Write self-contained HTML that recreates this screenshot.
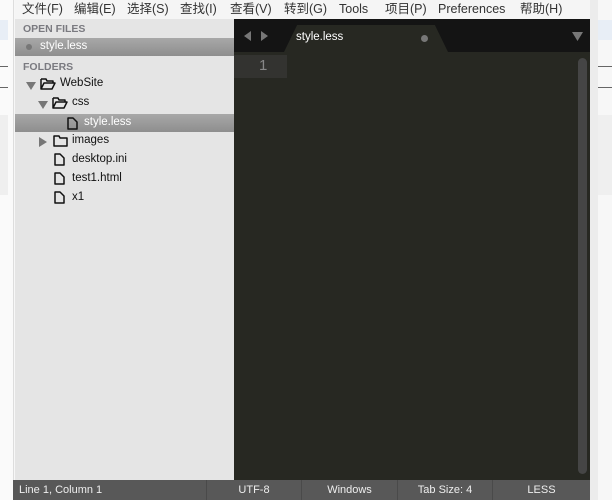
<!DOCTYPE html>
<html><head><meta charset="utf-8"><style>
*{margin:0;padding:0;box-sizing:border-box}
body{width:612px;height:500px;overflow:hidden;background:#f7f7f7;font-family:"Liberation Sans","Noto Sans CJK SC",sans-serif;position:relative}
.a{position:absolute}
.menu{left:15px;top:0;width:575px;height:19px;background:#f5f5f5;font-size:12.5px;color:#333;white-space:nowrap}
.menu span{position:absolute;top:0;height:19px;line-height:19px}
.side{left:15px;top:19px;width:219px;height:461px;background:#e5e5e5;font-size:11.5px;color:#111}
.hdr{color:#7a7a80;font-weight:bold;font-size:10.5px;position:absolute;left:8px}
.sel{position:absolute;left:0;width:219px;height:18px;background:linear-gradient(#a8a8a8,#8e8e8e);color:#fff}
.it{position:absolute;white-space:nowrap}
.ed{left:234px;top:19px;width:356px;height:461px;background:#272822}
.tabs{left:234px;top:19px;width:356px;height:33px;background:#141414}
.status{left:13px;top:480px;width:577px;height:20px;background:#585858;color:#eee;font-size:11px}
.status div{position:absolute;top:0;height:20px;line-height:20px;border-left:1px solid #4a4a4a;text-align:center}
svg{position:absolute}
</style></head><body>
<div class="a" style="left:0;top:0;width:14px;height:500px;background:#fafafa;border-right:1px solid #ddd"></div>
<div class="a" style="left:0;top:20px;width:8px;height:20px;background:#e8eef6"></div>
<div class="a" style="left:0;top:66px;width:8px;height:1px;background:#666"></div>
<div class="a" style="left:0;top:87px;width:8px;height:1px;background:#666"></div>
<div class="a" style="left:0;top:115px;width:8px;height:80px;background:#efefef"></div>
<div class="a" style="left:590px;top:0;width:8px;height:500px;background:#ececec"></div>
<div class="a" style="left:598px;top:20px;width:14px;height:20px;background:#e8eef6"></div>
<div class="a" style="left:598px;top:66px;width:14px;height:1px;background:#666"></div>
<div class="a" style="left:598px;top:87px;width:14px;height:1px;background:#666"></div>
<div class="a" style="left:598px;top:115px;width:14px;height:80px;background:#efefef"></div>
<div class="a menu">
<span style="left:7px">文件(F)</span><span style="left:59px">编辑(E)</span><span style="left:112px">选择(S)</span><span style="left:165px">查找(I)</span><span style="left:215px">查看(V)</span><span style="left:269px">转到(G)</span><span style="left:324px">Tools</span><span style="left:370px">项目(P)</span><span style="left:423px">Preferences</span><span style="left:505px">帮助(H)</span>
</div>
<div class="a side">
<div class="hdr" style="top:4px">OPEN FILES</div>
<div class="sel" style="top:19px"><span class="it" style="left:11px;top:6px;width:6px;height:6px;border-radius:50%;background:#777"></span><span class="it" style="left:25px;top:2px">style.less</span></div>
<div class="hdr" style="top:42px">FOLDERS</div>
<svg style="left:11px;top:62px" width="10" height="9"><path d="M0 1H10L5 9Z" fill="#777"/></svg>
<svg style="left:25px;top:58px" width="16" height="14"><path d="M1 2H6L7 4H13V6M1 2V12L4 6H15L12 12H1" fill="none" stroke="#111" stroke-width="1.5" stroke-linejoin="round"/></svg>
<div class="it" style="left:45px;top:58px">WebSite</div>
<svg style="left:23px;top:81px" width="10" height="9"><path d="M0 1H10L5 9Z" fill="#777"/></svg>
<svg style="left:37px;top:77px" width="16" height="14"><path d="M1 2H6L7 4H13V6M1 2V12L4 6H15L12 12H1" fill="none" stroke="#111" stroke-width="1.5" stroke-linejoin="round"/></svg>
<div class="it" style="left:57px;top:77px">css</div>
<div class="sel" style="top:95px"><svg style="left:52px;top:3px" width="11" height="13"><path d="M1 1H6L10 5V12H1Z" fill="none" stroke="#111" stroke-width="1.5" stroke-linejoin="round"/></svg><span class="it" style="left:69px;top:2px">style.less</span></div>
<svg style="left:23px;top:118px" width="9" height="10"><path d="M1 0V10L9 5Z" fill="#777"/></svg>
<svg style="left:38px;top:115px" width="16" height="14"><path d="M1 2H6L7 4H14V12H1Z" fill="none" stroke="#111" stroke-width="1.5" stroke-linejoin="round"/></svg>
<div class="it" style="left:57px;top:115px">images</div>
<svg style="left:39px;top:134px" width="11" height="13"><path d="M1 1H6L10 5V12H1Z" fill="none" stroke="#111" stroke-width="1.5" stroke-linejoin="round"/></svg>
<div class="it" style="left:57px;top:134px">desktop.ini</div>
<svg style="left:39px;top:153px" width="11" height="13"><path d="M1 1H6L10 5V12H1Z" fill="none" stroke="#111" stroke-width="1.5" stroke-linejoin="round"/></svg>
<div class="it" style="left:57px;top:153px">test1.html</div>
<svg style="left:39px;top:172px" width="11" height="13"><path d="M1 1H6L10 5V12H1Z" fill="none" stroke="#111" stroke-width="1.5" stroke-linejoin="round"/></svg>
<div class="it" style="left:57px;top:172px">x1</div>
</div>
<div class="a ed"></div>
<div class="a tabs">
<svg style="left:10px;top:12px" width="24" height="10"><path d="M7 0V10L0 5Z M17 0V10L24 5Z" fill="#777"/></svg>
<div class="a" style="left:50px;top:6px;width:164px;height:27px;background:#272822;border-radius:8px 8px 0 0;clip-path:polygon(0 100%,8% 0,92% 0,100% 100%)"></div>
<div class="a" style="left:62px;top:12px;color:#fff;font-size:11.5px">style.less</div>
<div class="a" style="left:187px;top:16px;width:7px;height:7px;border-radius:50%;background:#777"></div>
<svg style="left:338px;top:13px" width="11" height="9"><path d="M0 0H11L5.5 9Z" fill="#777"/></svg>
</div>
<div class="a" style="left:234px;top:55px;width:53px;height:23px;background:#333330"></div>
<div class="a" style="left:259px;top:57px;color:#888;font-size:15px">1</div>
<div class="a" style="left:578px;top:58px;width:9px;height:416px;background:#454545;border-radius:5px"></div>
<div class="a status">
<div style="left:0;width:193px;text-align:left;padding-left:6px;border:none">Line 1, Column 1</div>
<div style="left:193px;width:95px">UTF-8</div>
<div style="left:288px;width:96px">Windows</div>
<div style="left:384px;width:95px">Tab Size: 4</div>
<div style="left:479px;width:98px">LESS</div>
</div>
</body></html>
